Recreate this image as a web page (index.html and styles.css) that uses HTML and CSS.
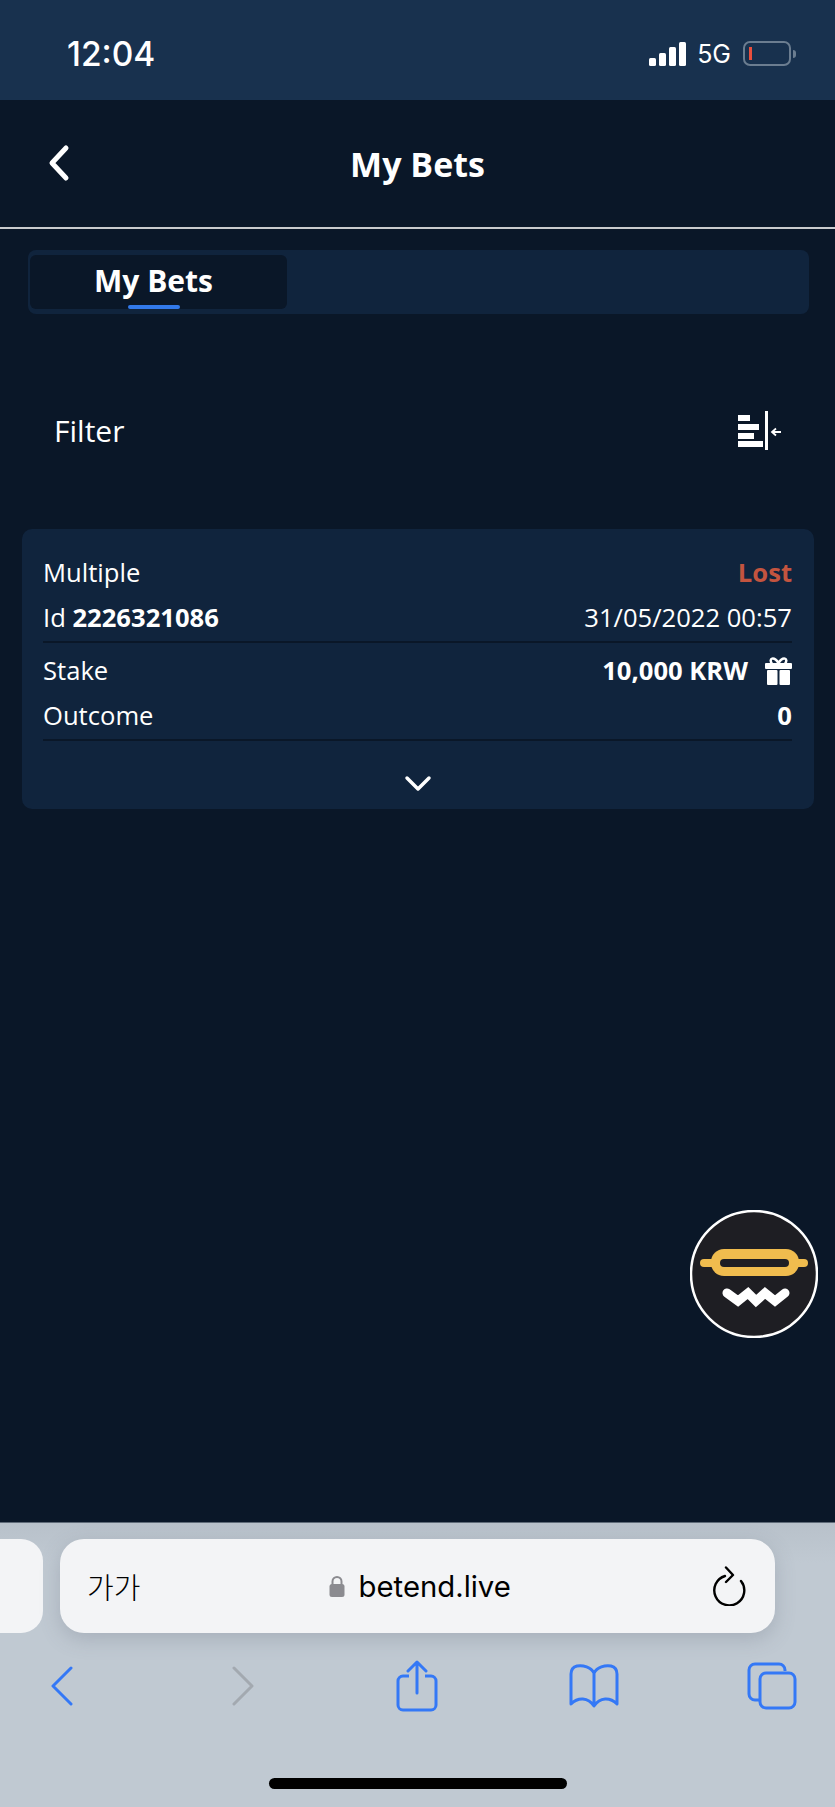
FILE: index.html
```html
<!DOCTYPE html>
<html lang="en">
<head>
    <meta charset="UTF-8">
    <meta name="viewport" content="width=device-width, initial-scale=1.0">
    <title>My Bets</title>
    <link rel="stylesheet" href="styles.css">
</head>
<body>
    <div class="status-bar">
        <span class="status-time">12:04</span>
        <div class="status-icons">
            <div class="signal">
                <span class="signal-bar bar-1"></span>
                <span class="signal-bar bar-2"></span>
                <span class="signal-bar bar-3"></span>
                <span class="signal-bar bar-4"></span>
            </div>
            <span class="status-network">5G</span>
            <div class="battery">
                <span class="battery-level"></span>
            </div>
            <span class="battery-cap"></span>
        </div>
    </div>

    <header class="page-header">
        <a class="back-btn">
            <svg width="24" height="38" viewBox="0 0 24 38">
                <path d="M20 4 L6 19 L20 34" fill="none" stroke="#fff" stroke-width="5" stroke-linecap="round" stroke-linejoin="round"/>
            </svg>
        </a>
        <h1>My Bets</h1>
    </header>

    <main class="content">
        <div class="tabs">
            <div class="tab-active">
                <span>My Bets</span>
                <span class="tab-marker"></span>
            </div>
        </div>

        <div class="filter-row">
            <span>Filter</span>
            <svg class="filter-icon" width="44" height="40" viewBox="0 0 44 40">
                <rect x="0" y="4" width="12" height="6" fill="#fff"/>
                <rect x="0" y="13" width="21" height="6" fill="#fff"/>
                <rect x="0" y="22" width="16" height="6" fill="#fff"/>
                <rect x="0" y="30" width="25" height="6" fill="#fff"/>
                <rect x="27" y="0" width="3" height="39" fill="#fff"/>
                <path d="M43 21 H35 M38 17.5 L34 21 L38 24.500" fill="none" stroke="#fff" stroke-width="1.800"/>
            </svg>
        </div>

        <section class="bet-card">
            <div class="bet-group">
                <div class="bet-row">
                    <span>Multiple</span>
                    <span class="status-lost">Lost</span>
                </div>
                <div class="bet-row">
                    <span>Id <b>2226321086</b></span>
                    <span>31/05/2022 00:57</span>
                </div>
            </div>
            <div class="bet-group">
                <div class="bet-row">
                    <span>Stake</span>
                    <span class="bet-stake">
                        <b>10,000 KRW</b>
                        <svg width="27" height="28" viewBox="0 0 27 28">
                            <path d="M7 7 C3 1 9 -1 13.500 6 C18 -1 24 1 20 7" fill="none" stroke="#fff" stroke-width="2.500"/>
                            <rect x="0" y="6" width="27" height="6" rx="1" fill="#fff"/>
                            <rect x="2" y="13" width="10.500" height="15" rx="1" fill="#fff"/>
                            <rect x="14.500" y="13" width="10.500" height="15" rx="1" fill="#fff"/>
                        </svg>
                    </span>
                </div>
                <div class="bet-row">
                    <span>Outcome</span>
                    <b>0</b>
                </div>
            </div>
            <div class="bet-expand">
                <svg width="28" height="17" viewBox="0 0 28 17">
                    <path d="M3 3 L14 14 L25 3" fill="none" stroke="#fff" stroke-width="3.500" stroke-linecap="round" stroke-linejoin="round"/>
                </svg>
            </div>
        </section>
    </main>

    <!-- floating casino shortcut -->
    <a class="float-btn">
        <svg width="128" height="128" viewBox="0 0 128 128">
            <circle cx="64" cy="64" r="63" fill="#1e1e23" stroke="#fff" stroke-width="2.500"/>
            <path d="M14 53 H114" stroke="#f0bc4e" stroke-width="8" stroke-linecap="round"/>
            <rect x="21" y="39" width="88" height="27" rx="13" fill="#f0bc4e"/>
            <rect x="30" y="49" width="69" height="8" rx="4" fill="#1e1e23"/>
            <path d="M37 83 L48 91 L58 83 L66 91 L75 83 L85 91 L95 83" fill="none" stroke="#fff" stroke-width="9" stroke-linecap="round" stroke-linejoin="miter"/>
        </svg>
    </a>

    <footer class="browser-bar">
        <div class="url-row">
            <div class="url-prev"></div>
            <div class="url-pill">
                <span class="url-text-size">가가</span>
                <div class="url-address">
                    <svg width="16" height="22" viewBox="0 0 16 22">
                        <path d="M3.500 10 V6.500 a4.500 4.500 0 0 1 9 0 V10" fill="none" stroke="#8b8b90" stroke-width="2"/>
                        <rect x="0.500" y="9" width="15" height="13" rx="2.500" fill="#8b8b90"/>
                    </svg>
                    <span>betend.live</span>
                </div>
                <svg class="url-reload" width="34" height="40" viewBox="0 0 34 40">
                    <path d="M12 9 A15 15 0 1 0 28 14" transform="translate(0 1)" fill="none" stroke="#000" stroke-width="2.400" stroke-linecap="round"/>
                    <path d="M13 1.500 L20 9 L13 16" fill="none" stroke="#000" stroke-width="2.400" stroke-linecap="round" stroke-linejoin="round"/>
                </svg>
            </div>
        </div>
        <nav class="browser-nav">
            <svg width="24" height="40" viewBox="0 0 24 40">
                <path d="M21 2 L3 20 L21 38" fill="none" stroke="#3478f6" stroke-width="3" stroke-linecap="round" stroke-linejoin="round"/>
            </svg>
            <svg class="nav-forward" width="24" height="40" viewBox="0 0 24 40">
                <path d="M3 2 L21 20 L3 38" fill="none" stroke="#a3a9b0" stroke-width="3" stroke-linecap="round" stroke-linejoin="round"/>
            </svg>
            <svg width="42" height="52" viewBox="0 0 42 52">
                <path d="M13 16 H7 a5 5 0 0 0 -5 5 V45 a5 5 0 0 0 5 5 H35 a5 5 0 0 0 5 -5 V21 a5 5 0 0 0 -5 -5 H29" fill="none" stroke="#3478f6" stroke-width="3"/>
                <path d="M21 33 V3 M12 11 L21 2 L30 11" fill="none" stroke="#3478f6" stroke-width="3" stroke-linecap="round" stroke-linejoin="round"/>
            </svg>
            <svg width="52" height="44" viewBox="0 0 52 44">
                <path d="M26 9 C23 3 15 1 9 2 C5 3 3 5 3 10 V40 C10 33 20 33 26 42 C32 33 42 33 49 40 V10 C49 5 47 3 43 2 C37 1 29 3 26 9 Z M26 9 V42" fill="none" stroke="#3478f6" stroke-width="3" stroke-linejoin="round"/>
            </svg>
            <svg width="50" height="48" viewBox="0 0 50 48">
                <path d="M38 9 V8 a6 6 0 0 0 -6 -6 H8 a6 6 0 0 0 -6 6 V32 a6 6 0 0 0 6 6 H12" fill="none" stroke="#3478f6" stroke-width="3"/>
                <rect x="13" y="11" width="35" height="35" rx="6" fill="none" stroke="#3478f6" stroke-width="3"/>
            </svg>
        </nav>
        <div class="home-bar"></div>
    </footer>
</body>
</html>
```

FILE: styles.css
```css
* {
    margin: 0;
    padding: 0;
    box-sizing: border-box;
}

body {
    position: relative;
    display: flex;
    flex-direction: column;
    height: 100vh;
    overflow: hidden;
    background-color: #0a1728;
    color: #fff;
    font-family: 'Open Sans', sans-serif;
}

/* phone status bar */
.status-bar {
    display: flex;
    justify-content: space-between;
    align-items: center;
    height: 100px;
    padding: 7px 39px 0 67px;
    background: #18314e;
}

.status-time {
    font-family: 'Inter', sans-serif;
    font-size: 33.5px;
    font-weight: 500;
}

.status-icons {
    display: flex;
    align-items: center;
}

.signal {
    display: flex;
    align-items: flex-end;
    gap: 3px;
    height: 24px;
    margin-right: 11px;
}

.signal-bar {
    width: 7px;
    background: #fff;
    border-radius: 1.5px;
}

.bar-1 { height: 8px; }
.bar-2 { height: 13px; }
.bar-3 { height: 19px; }
.bar-4 { height: 24px; }

.status-network {
    font-family: 'Inter', sans-serif;
    font-size: 25px;
    margin-right: 12px;
}

.battery {
    width: 48px;
    height: 25px;
    padding: 4px 4px;
    border: 2px solid #6b7d90;
    border-radius: 7px;
}

.battery-level {
    display: block;
    width: 3px;
    height: 100%;
    background: #ea4f3d;
}

.battery-cap {
    width: 3px;
    height: 8px;
    margin-left: 2px;
    background: #6b7d90;
    border-radius: 0 3px 3px 0;
}

/* page header */
.page-header {
    position: relative;
    display: flex;
    justify-content: center;
    align-items: center;
    height: 129px;
    border-bottom: 2px solid #c9cbce;
}

.page-header h1 {
    font-size: 34px;
    font-weight: 700;
}

.back-btn {
    position: absolute;
    left: 46px;
    top: 44px;
    line-height: 0;
}

.content {
    flex: 1;
    padding: 21px 21px 0 22px;
}

/* tabs */
.tabs {
    height: 64px;
    margin: 0 5px 0 6px;
    padding: 5px 2px;
    background: #10243d;
    border-radius: 8px;
}

.tab-active {
    position: relative;
    display: flex;
    justify-content: center;
    align-items: center;
    width: 257px;
    height: 54px;
    padding-bottom: 3px;
    padding-right: 10px;
    background: #0a1728;
    border-radius: 6px;
    font-size: 30px;
    font-weight: 700;
}

.tab-marker {
    position: absolute;
    left: 98px;
    bottom: 0;
    width: 52px;
    height: 4px;
    background: #3279ea;
    border-radius: 2px;
}

/* filter */
.filter-row {
    display: flex;
    justify-content: space-between;
    align-items: center;
    height: 215px;
    padding: 18px 32px 0 32px;
    font-size: 30px;
}

/* bet card */
.bet-card {
    padding: 21px 22px 0 21px;
    background: #10243d;
    border-radius: 10px;
    font-size: 25.6px;
}

.bet-group {
    padding-bottom: 1px;
    margin-bottom: 5px;
    border-bottom: 2px solid #0a1728;
}

.bet-row {
    display: flex;
    justify-content: space-between;
    align-items: center;
    height: 45px;
}

.bet-row b {
    font-weight: 700;
}

.status-lost {
    color: #c4543f;
    font-weight: 700;
}

.bet-stake {
    display: flex;
    align-items: center;
    gap: 17px;
}

.bet-expand {
    display: flex;
    justify-content: center;
    align-items: center;
    height: 63px;
    padding-top: 11px;
}

/* floating shortcut */
.float-btn {
    position: absolute;
    right: 17px;
    top: 1210px;
    line-height: 0;
}

/* safari toolbar */
.browser-bar {
    height: 285px;
    background: linear-gradient(#b8c1ca, #c0c9d2 40px);
    border-top: 1px solid #5f6b78;
    color: #000;
    font-family: 'Inter', sans-serif;
}

.url-row {
    display: flex;
    gap: 17px;
    margin-top: 16px;
}

.url-prev {
    width: 43px;
    height: 94px;
    background: #f3f4f6;
    border-radius: 0 22px 22px 0;
}

.url-pill {
    display: flex;
    justify-content: space-between;
    align-items: center;
    width: 715px;
    height: 94px;
    padding: 0 28px 0 27px;
    background: #f3f4f6;
    border-radius: 24px;
    box-shadow: 0 6px 20px rgba(90, 100, 115, 0.25);
}

.url-text-size {
    font-family: 'Noto Sans CJK KR', sans-serif;
    font-size: 29px;
    font-weight: 300;
}

.url-address {
    display: flex;
    align-items: center;
    gap: 14px;
    font-size: 29.3px;
    margin-left: -14px;
}

/* five equal slots, the first one bleeding past the left edge */
.browser-nav {
    display: grid;
    grid-template-columns: repeat(5, 177.500px);
    justify-items: center;
    align-items: center;
    height: 70px;
    margin: 18px 0 0 -27px;
}

.nav-forward {
    margin-left: 8px;
}

.home-bar {
    width: 298px;
    height: 11px;
    margin: 57px auto 0;
    background: #000;
    border-radius: 6px;
}
```
